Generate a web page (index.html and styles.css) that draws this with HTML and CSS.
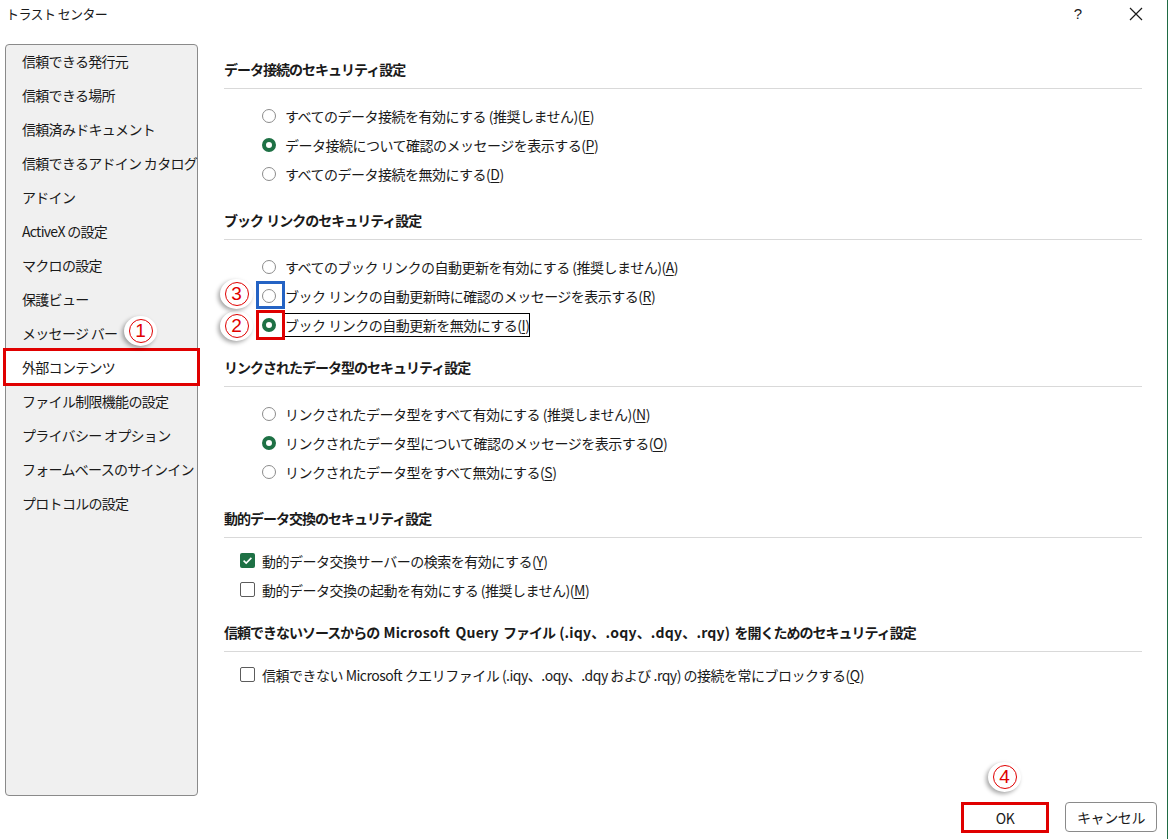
FILE: index.html
```html
<!DOCTYPE html>
<html lang="ja">
<head>
    <meta charset="UTF-8">
    <meta name="viewport" content="width=device-width, initial-scale=1.0">
    <title>トラスト センター</title>
    <link rel="stylesheet" href="styles.css">
</head>

<body>
    <div class="window">
        <!-- タイトルバー -->
        <div class="titlebar">
            <span class="title">トラスト センター</span>
            <span class="help">?</span>
            <svg class="close" width="14" height="14" viewBox="0 0 14 14">
                <path d="M1 1 L13 13 M13 1 L1 13" stroke="#1a1a1a" stroke-width="1.2" fill="none"/>
            </svg>
        </div>

        <div class="content">
            <!-- 左側メニュー -->
            <ul class="sidebar">
                <li>信頼できる発行元</li>
                <li>信頼できる場所</li>
                <li>信頼済みドキュメント</li>
                <li>信頼できるアドイン カタログ</li>
                <li>アドイン</li>
                <li>ActiveX の設定</li>
                <li>マクロの設定</li>
                <li>保護ビュー</li>
                <li>メッセージ バー</li>
                <li class="selected">外部コンテンツ</li>
                <li>ファイル制限機能の設定</li>
                <li>プライバシー オプション</li>
                <li>フォームベースのサインイン</li>
                <li>プロトコルの設定</li>
            </ul>

            <!-- 設定 -->
            <div class="main">
                <div class="section">
                    <h2>データ接続のセキュリティ設定</h2>
                    <div class="options">
                        <div class="row"><span class="radio"></span>すべてのデータ接続を有効にする (推奨しません)(<u>E</u>)</div>
                        <div class="row"><span class="radio checked"></span>データ接続について確認のメッセージを表示する(<u>P</u>)</div>
                        <div class="row"><span class="radio"></span>すべてのデータ接続を無効にする(<u>D</u>)</div>
                    </div>
                </div>

                <div class="section">
                    <h2>ブック リンクのセキュリティ設定</h2>
                    <div class="options short">
                        <div class="row"><span class="radio"></span>すべてのブック リンクの自動更新を有効にする (推奨しません)(<u>A</u>)</div>
                        <div class="row"><span class="radio"><span class="mark blue"></span></span>ブック リンクの自動更新時に確認のメッセージを表示する(<u>R</u>)</div>
                        <div class="row"><span class="radio checked"><span class="mark red"></span></span><span class="focus">ブック リンクの自動更新を無効にする(<u>I</u>)</span></div>
                    </div>
                </div>

                <div class="section">
                    <h2>リンクされたデータ型のセキュリティ設定</h2>
                    <div class="options">
                        <div class="row"><span class="radio"></span>リンクされたデータ型をすべて有効にする (推奨しません)(<u>N</u>)</div>
                        <div class="row"><span class="radio checked"></span>リンクされたデータ型について確認のメッセージを表示する(<u>O</u>)</div>
                        <div class="row"><span class="radio"></span>リンクされたデータ型をすべて無効にする(<u>S</u>)</div>
                    </div>
                </div>

                <div class="section">
                    <h2>動的データ交換のセキュリティ設定</h2>
                    <div class="options checks">
                        <div class="row"><span class="check checked">
                            <svg width="15" height="15" viewBox="0 0 15 15"><path d="M3.6 7.6 L6.2 10.1 L11.4 4.9" stroke="#fff" stroke-width="1.6" fill="none"/></svg>
                        </span>動的データ交換サーバーの検索を有効にする(<u>Y</u>)</div>
                        <div class="row"><span class="check"></span>動的データ交換の起動を有効にする (推奨しません)(<u>M</u>)</div>
                    </div>
                </div>

                <div class="section">
                    <h2>信頼できないソースからの <span class="latin">Microsoft Query</span> ファイル <span class="latin">(.iqy、.oqy、.dqy、.rqy)</span> を開くためのセキュリティ設定</h2>
                    <div class="options checks">
                        <div class="row"><span class="check"></span>信頼できない Microsoft クエリファイル (.iqy、.oqy、.dqy および .rqy) の接続を常にブロックする(<u>Q</u>)</div>
                    </div>
                </div>
            </div>
        </div>

        <!-- ボタン -->
        <div class="footer">
            <button class="btn ok">OK</button>
            <button class="btn">キャンセル</button>
        </div>

        <!-- 注釈の番号 -->
        <div class="badge b1"><span>1</span></div>
        <div class="badge b2"><span>2</span></div>
        <div class="badge b3"><span>3</span></div>
        <div class="badge b4"><span>4</span></div>
    </div>
</body>
</html>
```

FILE: styles.css
```css
/* トラスト センター ダイアログ */

body {
    margin: 0;
    font-family: "Noto Sans CJK JP", "Noto Sans", sans-serif;
    color: #1a1a1a;
    background: #fff;
}

.window {
    position: relative;
    width: 1167px;
    height: 839px;
    border-right: 1px solid #1f6b43;
    display: flex;
    flex-direction: column;
}

.titlebar {
    height: 44px;
    display: flex;
    align-items: flex-start;
    padding-top: 5px;
    box-sizing: border-box;
}

.title {
    margin-left: 6px;
    font-size: 13px;
    line-height: 18px;
    letter-spacing: -0.6px;
}

.help {
    margin-left: auto;
    font-size: 15px;
    line-height: 18px;
    font-family: "Liberation Sans", sans-serif;
}

.close {
    margin: 2px 24px 0 47px;
}

.content {
    flex: 1;
    display: flex;
    align-items: flex-start;
}

.sidebar {
    list-style: none;
    margin: 0 0 0 5px;
    padding: 0;
    width: 193px;
    height: 752px;
    box-sizing: border-box;
    background: #f0f0f0;
    border: 1px solid #8a8a8a;
    border-radius: 4px;
}

.sidebar li {
    height: 34px;
    line-height: 34px;
    padding-left: 16px;
    font-size: 14px;
    letter-spacing: -0.7px;
    white-space: nowrap;
}

.sidebar li:first-child {
    margin-top: -1px;
}

.sidebar li.selected {
    background: #fff;
    outline: 3px solid #e00000;
    outline-offset: -1px;
    margin: 0 -1px;
    padding-left: 17px;
}

.main {
    margin-left: 26px;
    width: 918px;
    padding-top: 15px;
}

.section h2 {
    margin: 0;
    font-size: 14px;
    font-weight: bold;
    line-height: 20px;
    letter-spacing: -1px;
    word-spacing: 1px;
    padding-bottom: 9px;
    border-bottom: 1px solid #d9d9d9;
    white-space: nowrap;
}

.section h2 .latin {
    letter-spacing: 0.2px;
    word-spacing: 2px;
    margin: 0 1px;
}

.options {
    padding: 12px 0 22px 38px;
}

.options.short {
    padding-bottom: 18px;
}

.options.checks {
    padding: 8px 0 18px 16px;
}

.row {
    height: 29px;
    display: flex;
    align-items: center;
    font-size: 14px;
    letter-spacing: -0.5px;
    white-space: nowrap;
}

.row u {
    text-underline-offset: 2px;
}

.radio {
    position: relative;
    width: 14px;
    height: 14px;
    box-sizing: border-box;
    border: 1px solid #8c8c8c;
    border-radius: 50%;
    margin-right: 9px;
    flex-shrink: 0;
}

.radio.checked {
    border: 4px solid #1e7145;
}

.check {
    width: 15px;
    height: 15px;
    box-sizing: border-box;
    border: 1px solid #5c5c5c;
    border-radius: 2px;
    margin-right: 7px;
    flex-shrink: 0;
}

.check.checked {
    border: none;
    background: #1e7145;
}

.check svg {
    display: block;
}

.focus {
    border: 1px solid #000;
    padding: 1px 0 1px 0;
    margin-left: -1px;
}

/* 注釈の枠 */
.mark {
    position: absolute;
    box-sizing: border-box;
    border: 3px solid;
    width: 29px;
}

.mark.blue {
    left: -7px;
    top: -9px;
    height: 28px;
    border-color: #2463c4;
}

.mark.red {
    left: -10px;
    top: -12px;
    height: 30px;
    border-color: #e00000;
}

.footer {
    height: 43px;
    display: flex;
    justify-content: flex-end;
    align-items: flex-start;
    padding: 6px 10px 0 0;
    box-sizing: border-box;
    gap: 16px;
}

.btn {
    width: 92px;
    height: 30px;
    background: #fff;
    border: 1px solid #8a8a8a;
    border-radius: 4px;
    font-family: "Noto Sans CJK JP", sans-serif;
    font-size: 14px;
    color: #1a1a1a;
    letter-spacing: -0.4px;
}

.btn.ok {
    width: 88px;
    height: 31px;
    border: 3px solid #e00000;
    border-radius: 0;
}

/* 丸数字 */
.badge {
    position: absolute;
    width: 33px;
    height: 30px;
    border-radius: 50%;
    background: #fff;
    box-shadow: -2px 2px 4px rgba(0, 0, 0, 0.35);
    display: flex;
    align-items: center;
    justify-content: center;
}

.badge span {
    width: 22px;
    height: 22px;
    border: 1.5px solid #e00000;
    border-radius: 50%;
    color: #e00000;
    font-family: "Liberation Sans", sans-serif;
    font-size: 19px;
    line-height: 22px;
    text-align: center;
}

.b1 { left: 124px; top: 316px; }
.b2 { left: 220px; top: 311px; }
.b3 { left: 220px; top: 279px; }
.b4 { left: 988px; top: 762px; }
```
